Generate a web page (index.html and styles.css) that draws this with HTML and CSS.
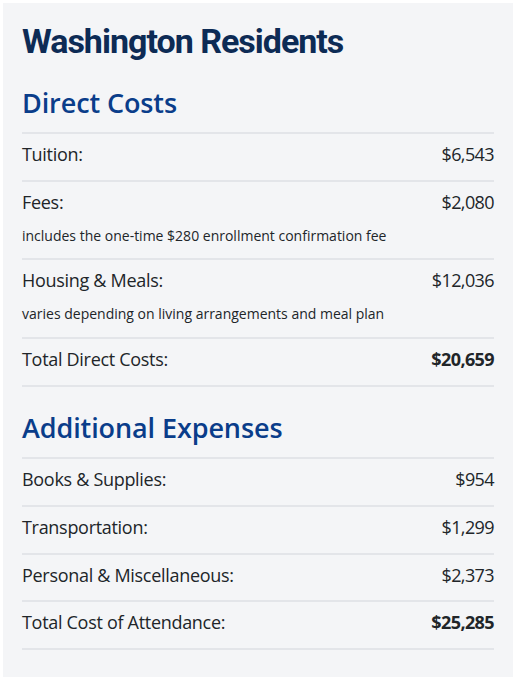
FILE: index.html
```html
<!DOCTYPE html>
<html lang="en">
<head>
<meta charset="utf-8">
<title>Washington Residents</title>
<link rel="stylesheet" href="styles.css">
</head>
<body>
<section class="card">
  <h1 class="title">Washington Residents</h1>

  <h2 class="section-title">Direct Costs</h2>
  <ul class="costs">
    <li class="row"><div class="line"><span>Tuition:</span><span class="value">$6,543</span></div></li>
    <li class="row"><div class="line"><span>Fees:</span><span class="value">$2,080</span></div>
      <p class="note">includes the one-time $280 enrollment confirmation fee</p></li>
    <li class="row"><div class="line"><span>Housing &amp; Meals:</span><span class="value">$12,036</span></div>
      <p class="note">varies depending on living arrangements and meal plan</p></li>
    <li class="row total"><div class="line"><span>Total Direct Costs:</span><span class="value amount">$20,659</span></div></li>
  </ul>

  <h2 class="section-title">Additional Expenses</h2>
  <ul class="costs">
    <li class="row"><div class="line"><span>Books &amp; Supplies:</span><span class="value">$954</span></div></li>
    <li class="row"><div class="line"><span>Transportation:</span><span class="value">$1,299</span></div></li>
    <li class="row"><div class="line"><span>Personal &amp; Miscellaneous:</span><span class="value">$2,373</span></div></li>
    <li class="row total"><div class="line"><span>Total Cost of Attendance:</span><span class="value amount">$25,285</span></div></li>
  </ul>
</section>
</body>
</html>
```

FILE: styles.css
```css
* { box-sizing: border-box; }

body {
  margin: 0;
  padding: 3px;
  background: #ffffff;
  font-family: "Open Sans", "Noto Sans", sans-serif;
  color: #212529;
}

.card {
  width: 510px;
  min-height: 674px;
  background: #f4f5f7;
  padding: 17px 19px 27px;
}

.title {
  margin: 0;
  font-family: Roboto, "Open Sans", sans-serif;
  font-size: 34px;
  line-height: 42px;
  font-weight: 700;
  letter-spacing: -1px;
  color: #0d2b55;
}

.section-title {
  margin: 23px 0 11px;
  font-size: 27px;
  line-height: 36px;
  font-weight: 600;
  letter-spacing: -0.1px;
  color: #0a3d8a;
}

.costs {
  list-style: none;
  margin: 0;
  padding: 0;
  border-bottom: 2px solid #e3e5e9;
}

.costs + .section-title {
  margin-top: 23.5px;
}

.row {
  border-top: 2px solid #e3e5e9;
  padding: 7px 0 12.75px;
}

.line {
  display: flex;
  justify-content: space-between;
  font-size: 18px;
  line-height: 26px;
  letter-spacing: -0.3px;
}

.value {
  letter-spacing: -0.6px;
}

.amount {
  font-weight: 700;
}

.note {
  margin: 10.75px 0 0;
  font-size: 14px;
  line-height: 20px;
}
```
